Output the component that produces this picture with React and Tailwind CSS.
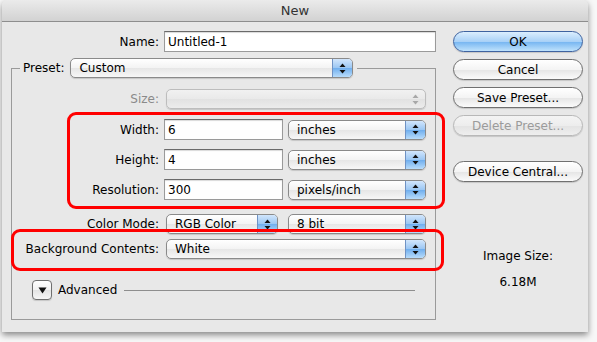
import React from 'react';

const font = { fontFamily: '"DejaVu Sans", "Liberation Sans", sans-serif' };

const Arrows = ({ disabled }) => (
  <svg width="7" height="11" viewBox="0 0 7 11">
    <path d="M3.5 0.5 L6.5 4 L0.5 4 Z" fill={disabled ? '#a8a8a8' : '#111'} />
    <path d="M3.5 10.5 L6.5 7 L0.5 7 Z" fill={disabled ? '#a8a8a8' : '#111'} />
  </svg>
);

const Popup = ({ label, className = '', disabled }) => (
  <div
    className={`flex h-[20px] items-stretch rounded-[5px] border shadow-[0_1px_1px_rgba(0,0,0,0.15)] ${
      disabled
        ? 'border-[#bdbdbd] bg-[linear-gradient(#f1f1f1,#e9e9e9_50%,#e2e2e2_51%,#ececec)]'
        : 'border-[#8a8a8a] bg-[linear-gradient(#ffffff,#f3f3f3_50%,#e6e6e6_51%,#f7f7f7)]'
    } ${className}`}
  >
    <div className="flex flex-1 items-center pl-[8px] text-[12px] text-black">{label}</div>
    <div
      className={`flex w-[20px] items-center justify-center rounded-r-[4px] ${
        disabled
          ? ''
          : 'border-l border-[#6f92c4] bg-[linear-gradient(#d2e6fc,#9ac6f3_50%,#6faeee_51%,#b8dcfb)]'
      }`}
    >
      <Arrows disabled={disabled} />
    </div>
  </div>
);

const Field = ({ value, className = '' }) => (
  <div
    className={`flex h-[21px] items-center border border-[#9a9a9a] border-t-[#6a6a6a] bg-white pl-[3px] text-[12px] text-black shadow-[inset_0_1px_1px_rgba(0,0,0,0.15)] ${className}`}
  >
    {value}
  </div>
);

const Button = ({ children, primary, disabled }) => (
  <div
    className={`flex h-[21px] w-[130px] items-center justify-center rounded-full border text-[12px] shadow-[0_1px_1px_rgba(0,0,0,0.15)] ${
      primary
        ? 'border-[#3f63a0] bg-[linear-gradient(#dbeefe,#a9d1f7_50%,#74b4f1_51%,#bfe2fc)] text-black'
        : disabled
        ? 'border-[#b8b8b8] bg-[linear-gradient(#f4f4f4,#ededed_50%,#e3e3e3_51%,#eeeeee)] text-[#9b9b9b]'
        : 'border-[#707070] bg-[linear-gradient(#ffffff,#f4f4f4_50%,#e5e5e5_51%,#fbfbfb)] text-black'
    }`}
  >
    {children}
  </div>
);

const Label = ({ children, gray }) => (
  <div className={`w-[147px] shrink-0 text-right text-[12px] ${gray ? 'text-[#8a8a8a]' : 'text-black'}`}>
    {children}
  </div>
);

export default function App() {
  return (
    <div className="relative h-[342px] w-[597px] overflow-hidden bg-[#f7f7f7]" style={font}>
      <div className="ml-[2px] h-[332px] w-[586px] overflow-hidden rounded-t-[5px] bg-[#e8e8e8] shadow-[0_3px_6px_rgba(0,0,0,0.45)]">
        <div className="flex h-[22px] items-center justify-center border-b border-[#8e8e8e] bg-[linear-gradient(#ebebeb,#d2d2d2)] text-[13px] text-[#333]">
          New
        </div>

        <div className="flex">
          <div className="w-[449px]">
            <div className="mt-[9px] flex items-center">
              <div className="w-[157px] text-right text-[12px] text-black">Name:</div>
              <Field value="Untitled-1" className="ml-[5px] w-[272px]" />
            </div>

            <div className="ml-[9px] mt-[16px] h-[252px] w-[425px] border border-[#9a9a9a]">
              <div className="-mt-[11px] ml-[8px] flex w-[337px] items-center bg-[#e8e8e8] pl-[3px]">
                <span className="text-[12px] text-black">Preset:</span>
                <Popup label="Custom" className="ml-[6px] w-[283px]" />
              </div>

              <div className="mt-[11px] flex items-center">
                <Label gray>Size:</Label>
                <Popup disabled label="" className="ml-[7px] w-[260px]" />
              </div>

              <div className="mt-[10px] flex items-center">
                <Label>Width:</Label>
                <Field value="6" className="ml-[5px] w-[119px]" />
                <Popup label="inches" className="ml-[5px] w-[138px]" />
              </div>

              <div className="mt-[9px] flex items-center">
                <Label>Height:</Label>
                <Field value="4" className="ml-[5px] w-[119px]" />
                <Popup label="inches" className="ml-[5px] w-[138px]" />
              </div>

              <div className="mt-[9px] flex items-center">
                <Label>Resolution:</Label>
                <Field value="300" className="ml-[5px] w-[119px]" />
                <Popup label="pixels/inch" className="ml-[5px] w-[138px]" />
              </div>

              <div className="mt-[14px] flex items-center">
                <Label>Color Mode:</Label>
                <Popup label="RGB Color" className="ml-[7px] w-[112px]" />
                <Popup label="8 bit" className="ml-[10px] w-[138px]" />
              </div>

              <div className="mt-[5px] flex items-center">
                <Label>Background Contents:</Label>
                <Popup label="White" className="ml-[7px] w-[260px]" />
              </div>

              <div className="mt-[21px] flex items-center">
                <div className="ml-[20px] flex h-[20px] w-[20px] items-center justify-center rounded-[4px] border border-[#6f6f6f] bg-[linear-gradient(#ffffff,#f2f2f2_50%,#e3e3e3_51%,#f6f6f6)] shadow-[0_1px_1px_rgba(0,0,0,0.15)]">
                  <svg width="9" height="7" viewBox="0 0 9 7">
                    <path d="M0.5 0.5 L8.5 0.5 L4.5 6.5 Z" fill="#111" />
                  </svg>
                </div>
                <span className="ml-[6px] text-[12px] text-black">Advanced</span>
                <div className="ml-[7px] h-px w-[291px] bg-[#8e8e8e]" />
              </div>
            </div>
          </div>

          <div className="ml-[2px] flex w-[130px] flex-col items-center">
            <div className="mt-[9px]">
              <Button primary>OK</Button>
            </div>
            <div className="mt-[7px]">
              <Button>Cancel</Button>
            </div>
            <div className="mt-[7px]">
              <Button>Save Preset...</Button>
            </div>
            <div className="mt-[7px]">
              <Button disabled>Delete Preset...</Button>
            </div>
            <div className="mt-[25px]">
              <Button>Device Central...</Button>
            </div>
            <div className="mt-[65px] text-[12px] text-black">Image Size:</div>
            <div className="mt-[8px] text-[12px] text-black">6.18M</div>
          </div>
        </div>
      </div>

      <div className="absolute left-[67px] top-[112px] h-[97px] w-[378px] rounded-[9px] border-[3px] border-[#ff0000]" />
      <div className="absolute left-[11px] top-[229px] h-[42px] w-[433px] rounded-[9px] border-[3px] border-[#ff0000]" />
    </div>
  );
}
